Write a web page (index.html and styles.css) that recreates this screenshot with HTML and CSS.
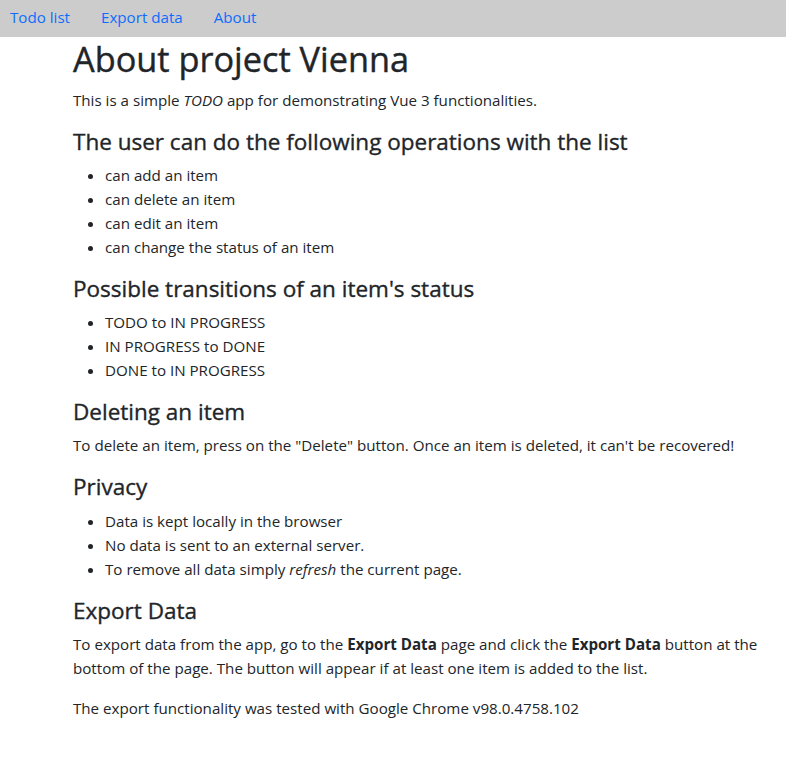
FILE: index.html
```html
<!DOCTYPE html>
<html lang="en">
<head>
<meta charset="utf-8">
<title>About project Vienna</title>
<link rel="stylesheet" href="styles.css">
</head>
<body>
<nav class="navbar">
  <a href="#" class="nav-link">Todo list</a>
  <a href="#" class="nav-link">Export data</a>
  <a href="#" class="nav-link">About</a>
</nav>
<main class="content">
  <h1 class="title">About project Vienna</h1>
  <p>This is a simple <em>TODO</em> app for demonstrating Vue 3 functionalities.</p>

  <h4 class="section">The user can do the following operations with the list</h4>
  <ul class="list">
    <li>can add an item</li>
    <li>can delete an item</li>
    <li>can edit an item</li>
    <li>can change the status of an item</li>
  </ul>

  <h4 class="section">Possible transitions of an item's status</h4>
  <ul class="list">
    <li>TODO to IN PROGRESS</li>
    <li>IN PROGRESS to DONE</li>
    <li>DONE to IN PROGRESS</li>
  </ul>

  <h4 class="section">Deleting an item</h4>
  <p>To delete an item, press on the "Delete" button. Once an item is deleted, it can't be recovered!</p>

  <h4 class="section">Privacy</h4>
  <ul class="list">
    <li>Data is kept locally in the browser</li>
    <li>No data is sent to an external server.</li>
    <li>To remove all data simply <em>refresh</em> the current page.</li>
  </ul>

  <h4 class="section">Export Data</h4>
  <p>To export data from the app, go to the <strong>Export Data</strong> page and click the <strong>Export Data</strong> button at the bottom of the page. The button will appear if at least one item is added to the list.</p>
  <p>The export functionality was tested with Google Chrome v98.0.4758.102</p>
</main>
</body>
</html>
```
FILE: styles.css
```css
html, body {
  margin: 0;
  padding: 0;
}
body {
  font-family: "Open Sans", "Noto Sans", sans-serif;
  font-size: 15.15px;
  line-height: 24px;
  color: #212529;
  background: #fff;
}
.navbar {
  display: flex;
  gap: 31px;
  height: 37px;
  box-sizing: border-box;
  align-items: center;
  padding: 0 10px 3px;
  background: #cccccc;
}
.nav-link {
  color: #0d6efd;
  text-decoration: none;
  font-size: 15.15px;
  line-height: 24px;
}
.content {
  margin-left: 73px;
  width: 702px;
}
.title {
  font-size: 34.3px;
  font-weight: 500;
  line-height: 40.6px;
  margin: 2px 0 8px;
  -webkit-text-stroke: 0.4px #212529;
}
p {
  margin: 0 0 16px;
}
.section {
  font-size: 22.5px;
  font-weight: 500;
  line-height: 27.3px;
  margin: 1px 0 8px;
  -webkit-text-stroke: 0.35px #212529;
}
.list {
  margin: 0 0 16px;
  padding-left: 32px;
}
strong {
  font-weight: 700;
}
```
